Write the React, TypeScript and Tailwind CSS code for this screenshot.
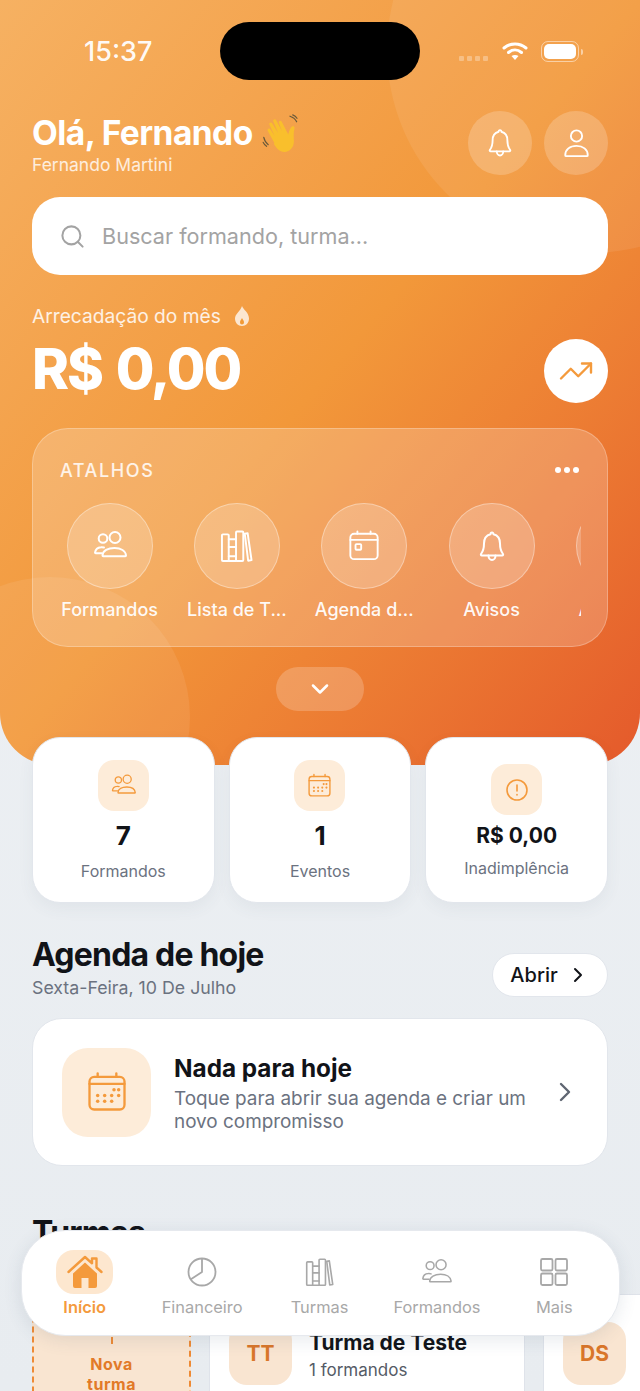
import { ChevronDown, ChevronRight, Search, TrendingUp } from "lucide-react";

const ORANGE = "#f49a3c";

type IconProps = { size?: number; color?: string; stroke?: number };

function People({ size = 34, color = "#fff", stroke = 2 }: IconProps) {
  return (
    <svg width={size} height={size} viewBox="0 0 34 34" fill="none" stroke={color} strokeWidth={stroke} strokeLinecap="round" strokeLinejoin="round">
      <circle cx="10" cy="9.500" r="4.300" />
      <circle cx="22" cy="8.500" r="5.500" />
      <path d="M11 18.500c-1-.3-2-.4-3-.3-3 .2-5.500 2-6 5.400 0 .5.300.7.700.7h6" />
      <path d="M9.500 26.500c.2-4.800 5.500-7.500 12-7.500s11 3 11.500 7.500c0 .5-.2.700-.7.700H10.200c-.5 0-.7-.2-.7-.7z" />
    </svg>
  );
}

function Books({ size = 34, color = "#fff", stroke = 2 }: IconProps) {
  return (
    <svg width={size} height={size} viewBox="0 0 34 34" fill="none" stroke={color} strokeWidth={stroke} strokeLinecap="round" strokeLinejoin="round">
      <rect x="2" y="4.500" width="7" height="27.500" rx="1" />
      <path d="M9 9.500h7.500M9 17.500h7.500M9 27h7.500" />
      <path d="M9 32h7.500" />
      <rect x="16.500" y="1.500" width="7.500" height="30.500" rx="1" />
      <path d="M25.500 3.800l3-.4 4 27.600-3.500.6z" />
    </svg>
  );
}

function CalendarSmall({ size = 34, color = "#fff", stroke = 2 }: IconProps) {
  return (
    <svg width={size} height={size} viewBox="0 0 34 34" fill="none" stroke={color} strokeWidth={stroke} strokeLinecap="round" strokeLinejoin="round">
      <rect x="2.500" y="4" width="29" height="27" rx="4" />
      <path d="M2.500 10.500h29M10 1.500V4M24 1.500V4" />
      <rect x="8" y="15" width="6" height="6" rx="1" />
    </svg>
  );
}

function CalendarDots({ size = 34, color = ORANGE, stroke = 2 }: IconProps) {
  const dots = [[24, 15], [28, 15], [10, 20], [16, 20], [22, 20], [28, 20], [10, 25], [16, 25], [22, 25]];
  return (
    <svg width={size} height={size} viewBox="0 0 36 36" fill="none" stroke={color} strokeWidth={stroke} strokeLinecap="round" strokeLinejoin="round">
      <rect x="3" y="5" width="30" height="28" rx="4" />
      <path d="M3 11h30M10 2v3M26 2v3" />
      {dots.map(([x, y]) => (
        <circle key={`${x}-${y}`} cx={x} cy={y + 1} r="1.500" fill={color} stroke="none" />
      ))}
    </svg>
  );
}

function BellIcon({ width = 24, height = 30 }: { width?: number; height?: number }) {
  return (
    <svg width={width} height={height} viewBox="0 0 26 32" fill="none" stroke="#fff" strokeWidth="2" strokeLinecap="round" strokeLinejoin="round">
      <path d="M13 2c-1 0-1.500.8-1.500 1.800C7 5 5 8.500 5 13c0 5-1 8-3 10.500-.4.600 0 1.500.8 1.500h20.400c.8 0 1.200-.9.8-1.500-2-2.500-3-5.500-3-10.500 0-4.500-2-8-6.500-9.200C14.500 2.800 14 2 13 2z" />
      <path d="M9.500 25c0 2.500 1.500 4.500 3.500 4.500s3.500-2 3.500-4.500" />
    </svg>
  );
}

function UserIcon() {
  return (
    <svg width="29" height="30" viewBox="0 0 30 32" fill="none" stroke="#fff" strokeWidth="2" strokeLinecap="round" strokeLinejoin="round">
      <circle cx="15" cy="8.500" r="6" />
      <path d="M3 29c0-6 5-10 12-10s12 4 12 10c0 .6-.4 1-1 1H4c-.6 0-1-.4-1-1z" />
    </svg>
  );
}

function Flame() {
  return (
    <svg width="16" height="20" viewBox="0 0 16 20">
      <path d="M8 0c1 3.500 7 6.500 7 12.500C15 17 12 20 8 20s-7-3-7-7.500C1 8 6.500 5 8 0z" fill="#fff" fillOpacity="0.75" />
      <path d="M8 12c.5 1.500 2 2.500 2 4.200 0 1.300-.9 2.300-2 2.300s-2-1-2-2.300C6 14.500 7.500 13.500 8 12z" fill="#f29a35" />
    </svg>
  );
}

function Wave() {
  return (
    <svg width="37" height="39" viewBox="0 0 33 35" fill="none">
      <path d="M11 26 5 15c-.7-1.400 1.500-2.700 2.400-1.300l4 6.300L6.500 9.500c-.7-1.500 1.600-2.700 2.500-1.300l5.500 9L10 6.500c-.6-1.500 1.700-2.600 2.500-1.200l5.500 10.500-3-8c-.5-1.500 1.700-2.400 2.500-1l6 11.500c.7-3 2-6.800 4-7.300 1.500-.4 1.800 1 1.500 2.500-.8 3-.8 6.500-.5 10 .4 6-3.500 10.500-8.500 10.500-4.500 0-7-3-9.500-7z" fill="#f9bf2c" />
      <path d="M1.500 21c.5 2.500 2 5 4 6.500M1 25.500c.8 1.500 1.800 2.700 3 3.500M25 2c2.500.8 5 2.800 6 5M27.500.8c1.500.5 3 1.700 3.800 3" stroke="#6b5a3a" strokeWidth="1.100" strokeLinecap="round" />
    </svg>
  );
}

function HomeFilled() {
  return (
    <svg width="36" height="34" viewBox="0 0 36 34">
      <path d="M1.500 17 18 2l7 6.300V3.500h4.500v9l5 4.500" fill="none" stroke={ORANGE} strokeWidth="2.400" strokeLinecap="round" strokeLinejoin="round" />
      <path d="M6 18.500 18 7.500l12 11V31a2 2 0 0 1-2 2h-6.500V23h-7v10H8a2 2 0 0 1-2-2z" fill={ORANGE} />
    </svg>
  );
}

function Pie({ color = "#a8a8a8" }: { color?: string }) {
  return (
    <svg width="30" height="30" viewBox="0 0 30 30" fill="none" stroke={color} strokeWidth="1.800" strokeLinejoin="round">
      <circle cx="15" cy="15" r="13.500" />
      <path d="M15 1.500V15l-11.500 7.500" />
    </svg>
  );
}

function GridIcon({ color = "#a8a8a8" }: { color?: string }) {
  return (
    <svg width="30" height="30" viewBox="0 0 30 30" fill="none" stroke={color} strokeWidth="1.800">
      <rect x="2" y="2" width="11.500" height="11.500" rx="1.500" />
      <rect x="16.500" y="2" width="11.500" height="11.500" rx="1.500" />
      <rect x="2" y="16.500" width="11.500" height="11.500" rx="1.500" />
      <rect x="16.500" y="16.500" width="11.500" height="11.500" rx="1.500" />
    </svg>
  );
}

function Wifi() {
  return (
    <svg width="26" height="20" viewBox="0 0 26 20" fill="none" stroke="#fff" strokeWidth="3" strokeLinecap="round">
      <path d="M2 7c6.500-5.500 15.500-5.500 22 0" />
      <path d="M6.500 11.500c4-3.300 9-3.300 13 0" />
      <path d="M13 19l-3.500-4c2-1.500 5-1.500 7 0z" fill="#fff" stroke="none" />
    </svg>
  );
}

const shortcuts = [
  { label: "Formandos", icon: <People /> },
  { label: "Lista de T...", icon: <Books size={33} /> },
  { label: "Agenda d...", icon: <CalendarSmall size={32} /> },
  { label: "Avisos", icon: <BellIcon width={26} height={33} /> },
  { label: "Anúncios", icon: null },
];

const tabs = [
  { label: "Financeiro", icon: <Pie /> },
  { label: "Turmas", icon: <Books size={29} color="#a8a8a8" stroke={1.900} /> },
  { label: "Formandos", icon: <People size={31} color="#a8a8a8" stroke={1.700} /> },
  { label: "Mais", icon: <GridIcon /> },
];

export default function App() {
  return (
    <div className="relative h-[1391px] w-[640px] overflow-hidden bg-gradient-to-b from-[#eff2f5] to-[#e8ecf0] font-['Inter',sans-serif]">
      {/* Hero */}
      <header className="relative h-[765px] overflow-hidden rounded-b-[52px] bg-gradient-to-br from-[#f6b162] via-[#f2983a] to-[#e4592b] px-8">
        <div className="absolute left-[387px] top-[-153px] h-[406px] w-[406px] rounded-full bg-white/[0.08]" />
        <div className="absolute left-[-90px] top-[577px] h-[280px] w-[280px] rounded-full bg-white/[0.08]" />

        <div className="relative flex h-[111px] items-start">
          <span className="ml-[52px] mt-[37px] text-[27px] font-medium leading-[30px] text-white/95">15:37</span>
          <div className="absolute left-[188px] top-[22px] h-[58px] w-[200px] rounded-full bg-black" />
          <div className="absolute left-[427px] top-[56px] flex gap-[3px]">
            <span className="h-[5px] w-[5px] rounded-[1px] bg-white/30" />
            <span className="h-[5px] w-[5px] rounded-[1px] bg-white/30" />
            <span className="h-[5px] w-[5px] rounded-[1px] bg-white/30" />
            <span className="h-[5px] w-[5px] rounded-[1px] bg-white/30" />
          </div>
          <div className="absolute left-[470px] top-[41px]">
            <Wifi />
          </div>
          <div className="absolute left-[509px] top-[41px] flex items-center gap-[2px]">
            <div className="h-[21px] w-[38px] rounded-[7px] border border-white/50 p-[2px]">
              <div className="h-full w-full rounded-[5px] bg-white" />
            </div>
            <span className="h-[6px] w-[2px] rounded-r-sm bg-white/50" />
          </div>
        </div>

        <div className="relative flex items-start justify-between">
          <div>
            <div className="flex h-[44px] items-center gap-[9px]">
              <h1 className="text-[33.500px] font-bold leading-[44px] tracking-[-0.55px] text-white">Olá, Fernando</h1>
              <Wave />
            </div>
            <p className="text-[17.500px] leading-[20px] text-white/80">Fernando Martini</p>
          </div>
          <div className="flex gap-3">
            <button className="flex h-16 w-16 items-center justify-center rounded-full bg-white/20">
              <BellIcon />
            </button>
            <button className="flex h-16 w-16 items-center justify-center rounded-full bg-white/20">
              <UserIcon />
            </button>
          </div>
        </div>

        <div className="relative mt-[22px] flex h-[78px] items-center gap-[16px] rounded-[28px] bg-white pl-[27px]">
          <Search size={27} color="#a3a3a3" strokeWidth={1.800} />
          <span className="text-[21.600px] text-[#a3a3a3]">Buscar formando, turma...</span>
        </div>

        <div className="relative mt-[29px] flex items-center gap-[13px]">
          <span className="text-[19.200px] leading-[24px] text-white/85">Arrecadação do mês</span>
          <Flame />
        </div>

        <div className="relative mt-[10px] flex items-center justify-between">
          <span className="pb-[3px] text-[56px] font-extrabold leading-[62px] tracking-[-2px] text-white [word-spacing:3.500px]">R$ 0,00</span>
          <button className="flex h-16 w-16 items-center justify-center rounded-full bg-white">
            <TrendingUp size={36} color={ORANGE} strokeWidth={1.600} />
          </button>
        </div>

        {/* Atalhos */}
        <section className="relative mt-[25px] h-[219px] rounded-[36px] border border-white/25 bg-white/20 pl-[27px]">
          <div className="flex h-[74px] items-center justify-between pr-[28px] pt-[8px]">
            <span className="text-[18px] font-medium tracking-[1.600px] text-white/85">ATALHOS</span>
            <div className="flex gap-[3px]">
              <span className="h-[6px] w-[6px] rounded-full bg-white" />
              <span className="h-[6px] w-[6px] rounded-full bg-white" />
              <span className="h-[6px] w-[6px] rounded-full bg-white" />
            </div>
          </div>
          <div className="-ml-[14px] flex w-[535px] overflow-hidden">
            {shortcuts.map((s) => (
              <div key={s.label} className="flex w-[127.300px] shrink-0 flex-col items-center">
                <div className="flex h-[86px] w-[86px] items-center justify-center rounded-full border border-white/35 bg-white/20">
                  {s.icon}
                </div>
                <span className="mt-[10px] w-[127px] truncate text-center text-[18px] font-medium leading-[22px] text-white/95">
                  {s.label}
                </span>
              </div>
            ))}
          </div>
        </section>

        <div className="relative mt-5 flex justify-center">
          <button className="flex h-11 w-[88px] items-center justify-center rounded-[22px] bg-white/20">
            <ChevronDown size={28} color="#fff" strokeWidth={2.200} />
          </button>
        </div>
      </header>

      {/* Stats */}
      <section className="relative mx-8 -mt-7 grid grid-cols-3 gap-[14px]">
        <div className="flex h-[166px] flex-col items-center rounded-[28px] border border-[#e2e6ec] bg-white pt-[22px] shadow-[0_6px_16px_rgba(60,80,110,0.06)]">
          <div className="flex h-[51px] w-[51px] items-center justify-center rounded-2xl bg-[#fdecd9]">
            <People size={25} color={ORANGE} stroke={1.800} />
          </div>
          <span className="mt-[9px] text-[26px] font-bold leading-[32px] text-[#111318]">7</span>
          <span className="mt-[9px] text-[16px] leading-[20px] text-[#6b7280]">Formandos</span>
        </div>
        <div className="flex h-[166px] flex-col items-center rounded-[28px] border border-[#e2e6ec] bg-white pt-[22px] shadow-[0_6px_16px_rgba(60,80,110,0.06)]">
          <div className="flex h-[51px] w-[51px] items-center justify-center rounded-2xl bg-[#fdecd9]">
            <CalendarDots size={25} />
          </div>
          <span className="mt-[9px] text-[26px] font-bold leading-[32px] text-[#111318]">1</span>
          <span className="mt-[9px] text-[16px] leading-[20px] text-[#6b7280]">Eventos</span>
        </div>
        <div className="flex h-[166px] flex-col items-center rounded-[28px] border border-[#e2e6ec] bg-white pt-[26px] shadow-[0_6px_16px_rgba(60,80,110,0.06)]">
          <div className="flex h-[51px] w-[51px] items-center justify-center rounded-2xl bg-[#fdecd9]">
            <svg width="24" height="24" viewBox="0 0 24 24" fill="none" stroke={ORANGE} strokeWidth="1.600" strokeLinecap="round">
              <circle cx="12" cy="12" r="10" />
              <path d="M12 7v6M12 16.500v.4" />
            </svg>
          </div>
          <span className="mt-[7px] text-[21px] font-bold leading-[28px] text-[#111318]">R$ 0,00</span>
          <span className="mt-[8px] text-[16px] leading-[20px] text-[#6b7280]">Inadimplência</span>
        </div>
      </section>

      {/* Agenda */}
      <section className="mx-8 mt-[33px]">
        <div className="flex items-end justify-between">
          <div>
            <h2 className="text-[32px] font-bold leading-[38px] tracking-[-0.8px] text-[#111318]">Agenda de hoje</h2>
            <p className="mt-[3px] text-[17.750px] leading-[22px] text-[#6b7280]">Sexta-Feira, 10 De Julho</p>
          </div>
          <button className="mb-[2px] flex h-[44px] w-[116px] items-center justify-center gap-[8px] rounded-full border border-[#e2e6ec] bg-white text-[20px] font-medium text-[#111318]">
            Abrir
            <ChevronRight size={24} color="#111318" strokeWidth={2} />
          </button>
        </div>
        <div className="mt-[19px] flex h-[148px] items-center rounded-[30px] border border-[#e2e6ec] bg-white pl-[29px] pr-[26px]">
          <div className="flex h-[89px] w-[89px] shrink-0 items-center justify-center rounded-[26px] bg-[#fdecd9]">
            <CalendarDots size={42} />
          </div>
          <div className="ml-[23px] flex-1 pt-[2px]">
            <p className="text-[24.300px] font-bold leading-[30px] text-[#111318]">Nada para hoje</p>
            <p className="mt-[4px] text-[18.900px] leading-[23px] text-[#6b7280]">
              Toque para abrir sua agenda e criar um
              <br />
              novo compromisso
            </p>
          </div>
          <ChevronRight size={32} color="#5f6672" strokeWidth={1.800} />
        </div>
      </section>

      {/* Turmas */}
      <section className="mt-[48px] pl-8">
        <h2 className="text-[32px] font-bold leading-[38px] tracking-[-0.8px] text-[#111318]">Turmas</h2>
        <div className="mt-[42px] flex gap-[18px]">
          <div className="flex h-[140px] w-[159px] shrink-0 flex-col items-center rounded-3xl border-2 border-dashed border-[#ee8a35] bg-[#f9e5d1] pt-[41px]">
            <span className="h-[7px] w-[2px] bg-[#ee8a35]" />
            <span className="mt-[10px] text-center text-[16px] font-bold leading-[20px] tracking-[0.5px] text-[#e27a28]">
              Nova
              <br />
              turma
            </span>
          </div>
          <div className="flex h-[140px] w-[316px] shrink-0 items-start gap-[17px] rounded-3xl border border-[#dfe3ea] bg-white pl-[19px] pt-[27px]">
            <div className="flex h-[63px] w-[63px] items-center justify-center rounded-[18px] bg-[#f9e5d1] text-[21px] font-bold text-[#d9762a]">TT</div>
            <div className="mt-[8px]">
              <p className="text-[21px] font-bold leading-[26px] text-[#111318]">Turma de Teste</p>
              <p className="mt-[2px] text-[17px] leading-[24px] text-[#555b66]">1 formandos</p>
            </div>
          </div>
          <div className="flex h-[140px] w-[300px] shrink-0 items-start rounded-3xl border border-[#dfe3ea] bg-white pl-[19px] pt-[27px]">
            <div className="flex h-[63px] w-[63px] items-center justify-center rounded-[18px] bg-[#f9e5d1] text-[21px] font-bold text-[#d9762a]">DS</div>
          </div>
        </div>
      </section>

      {/* Bottom nav */}
      <nav className="absolute left-[21px] top-[1230px] flex h-[106px] w-[599px] rounded-[44px] border border-[#e6e9ee] bg-white pl-[4px] pr-[6px] shadow-[0_4px_18px_rgba(60,80,110,0.12)]">
        <div className="flex flex-1 flex-col items-center pt-[19px]">
          <div className="flex h-[44px] w-[57px] items-center justify-center rounded-[18px] bg-[#fde7cf]">
            <HomeFilled />
          </div>
          <span className="mt-[3px] text-[16.400px] font-semibold leading-[20px] text-[#f49a3c]">Início</span>
        </div>
        {tabs.map((t) => (
          <div key={t.label} className="flex flex-1 flex-col items-center pt-[19px]">
            <div className="flex h-[44px] items-center justify-center">{t.icon}</div>
            <span className="mt-[3px] text-[16.400px] leading-[20px] text-[#a8a8a8]">{t.label}</span>
          </div>
        ))}
      </nav>
    </div>
  );
}
